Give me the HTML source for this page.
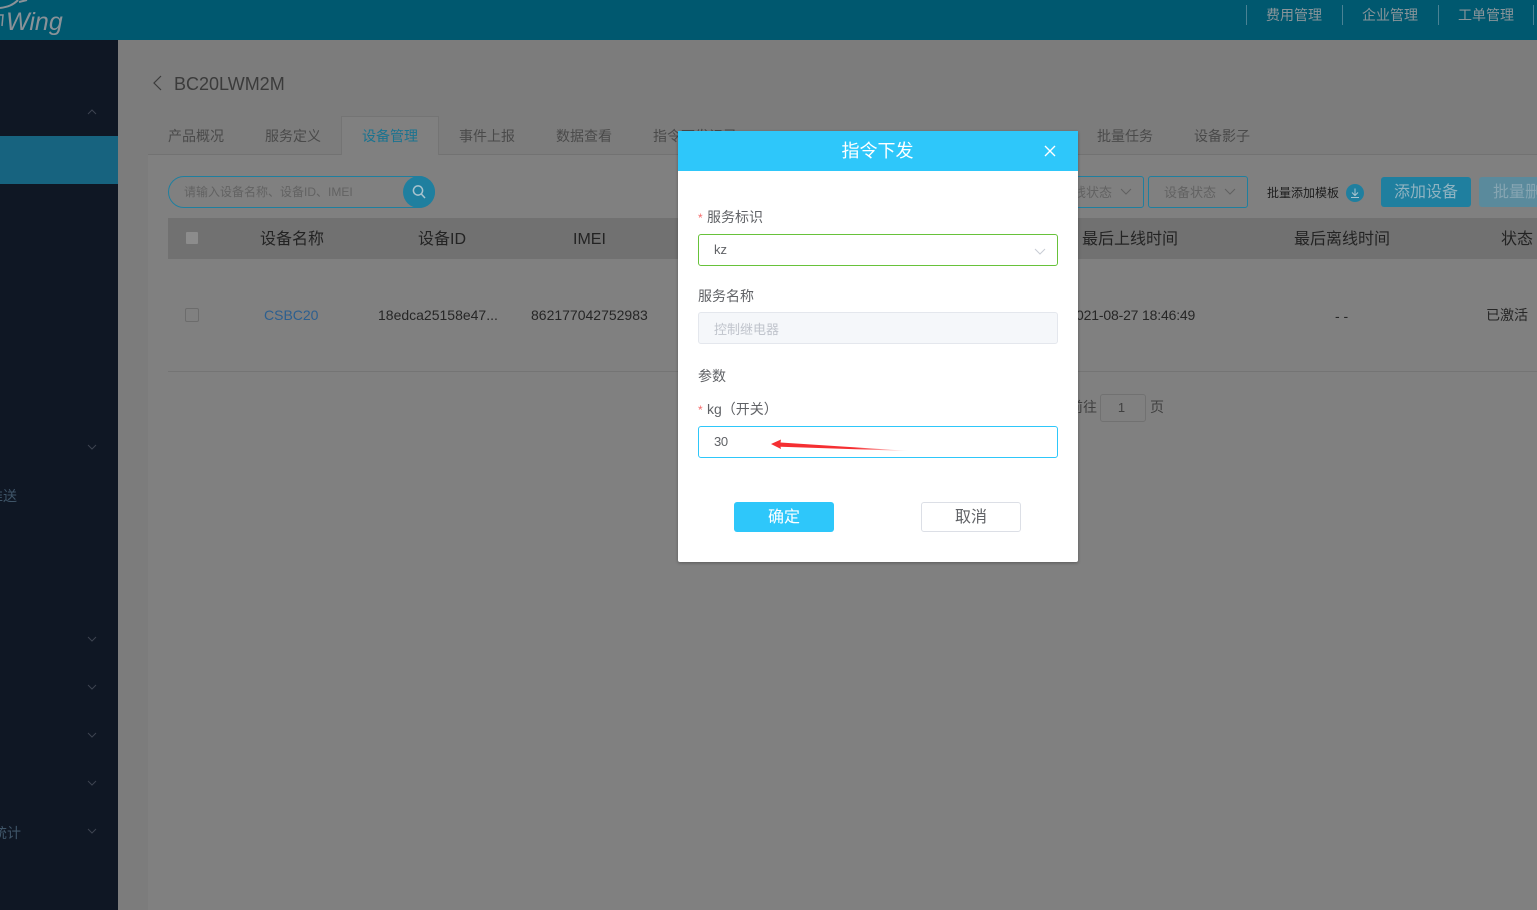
<!DOCTYPE html>
<html lang="zh-CN">
<head>
<meta charset="utf-8">
<title>指令下发</title>
<style>
html,body{margin:0;padding:0;width:1537px;height:910px;overflow:hidden;background:#7c7c7c;}
body{position:relative;font-family:"Liberation Sans","Noto Sans CJK SC",sans-serif;font-size:14px;color:#333;}
.a{position:absolute;white-space:nowrap;line-height:1;}
.box{position:absolute;box-sizing:border-box;}
.c{text-align:center;}
svg{position:absolute;overflow:visible;}
</style>
</head>
<body>
<!-- top bar -->
<div class="box" style="left:0;top:0;width:1537px;height:40px;background:#00586f;"></div>
<div class="a" style="left:6px;top:10px;font-size:25px;font-style:italic;color:#8a9298;">Wing</div>
<svg style="left:0;top:0;" width="40" height="40"><path d="M0 8C8 7 13 5 18 0M19 2L27 0" fill="none" stroke="#8a9298" stroke-width="2"/><path d="M0 15H3L2 26" fill="none" stroke="#8a9298" stroke-width="1.5"/></svg>
<div class="box" style="left:1246px;top:5px;width:1px;height:20px;background:#4a8294;"></div>
<div class="box" style="left:1342px;top:5px;width:1px;height:20px;background:#4a8294;"></div>
<div class="box" style="left:1438px;top:5px;width:1px;height:20px;background:#4a8294;"></div>
<div class="box" style="left:1533px;top:5px;width:1px;height:20px;background:#4a8294;"></div>
<div class="a" style="left:1266px;top:8px;color:#8a959a;">费用管理</div>
<div class="a" style="left:1362px;top:8px;color:#8a959a;">企业管理</div>
<div class="a" style="left:1458px;top:8px;color:#8a959a;">工单管理</div>

<!-- sidebar -->
<div class="box" style="left:0;top:40px;width:118px;height:870px;background:#0f1724;"></div>
<div class="box" style="left:0;top:136px;width:118px;height:48px;background:#17637f;"></div>
<svg style="left:0;top:0;" width="118" height="910" fill="none" stroke="#3d4450" stroke-width="1">
<path d="M88 114L92 110L96 114"/>
<path d="M88 445L92 449L96 445"/>
<path d="M88 637L92 641L96 637"/>
<path d="M88 685L92 689L96 685"/>
<path d="M88 733L92 737L96 733"/>
<path d="M88 781L92 785L96 781"/>
<path d="M88 829L92 833L96 829"/>
</svg>
<div class="a" style="left:-11px;top:489px;color:#3f5568;">推送</div>
<div class="a" style="left:-7px;top:826px;color:#3f5568;">统计</div>

<!-- content -->
<div class="box" style="left:148px;top:155px;width:1389px;height:755px;background:#808080;"></div>
<svg style="left:0;top:0;" width="170" height="100" fill="none" stroke="#3b3b3b" stroke-width="1.2"><path d="M161 76L154 83L161 90"/></svg>
<div class="a" style="left:174px;top:75px;font-size:18px;color:#3b3b3b;">BC20LWM2M</div>

<!-- tabs -->
<div class="box" style="left:148px;top:154px;width:1389px;height:1px;background:#727272;"></div>
<div class="box" style="left:341px;top:116px;width:98px;height:39px;background:#808080;border:1px solid #747474;border-bottom:0;"></div>
<div class="a" style="left:168px;top:129px;color:#4a4a4a;">产品概况</div>
<div class="a" style="left:265px;top:129px;color:#4a4a4a;">服务定义</div>
<div class="a" style="left:362px;top:129px;color:#1a7390;">设备管理</div>
<div class="a" style="left:459px;top:129px;color:#4a4a4a;">事件上报</div>
<div class="a" style="left:556px;top:129px;color:#4a4a4a;">数据查看</div>
<div class="a" style="left:653px;top:129px;color:#4a4a4a;">指令下发记录</div>
<div class="a" style="left:1097px;top:129px;color:#4a4a4a;">批量任务</div>
<div class="a" style="left:1194px;top:129px;color:#4a4a4a;">设备影子</div>

<!-- search -->
<div class="box" style="left:168px;top:176px;width:267px;height:32px;border:1px solid #1f7f9f;border-radius:16px;"></div>
<div class="a" style="left:184px;top:186px;font-size:12px;color:#626262;">请输入设备名称、设备ID、IMEI</div>
<div class="box" style="left:403px;top:176px;width:32px;height:32px;border-radius:50%;background:#1f7f9f;"></div>
<svg style="left:403px;top:176px;" width="32" height="32" fill="none" stroke="#a9c4cf" stroke-width="1.5"><circle cx="15" cy="14.500" r="4.600"/><path d="M18.300 18L22 22"/></svg>

<!-- filters -->
<div class="box" style="left:1060px;top:176px;width:84px;height:32px;border:1px solid #1f7f9f;border-radius:3px;"></div>
<div class="a" style="left:1073px;top:186px;font-size:13px;color:#626262;">线状态</div>
<svg style="left:0;top:0;" width="1300" height="200" fill="none" stroke="#606060"><path d="M1121 189L1126 194L1131 189"/><path d="M1225 189L1230 194L1235 189"/></svg>
<div class="box" style="left:1148px;top:176px;width:100px;height:32px;border:1px solid #1f7f9f;border-radius:3px;"></div>
<div class="a" style="left:1164px;top:186px;font-size:13px;color:#626262;">设备状态</div>
<div class="a" style="left:1267px;top:187px;font-size:12px;color:#1d1d1d;">批量添加模板</div>
<div class="box" style="left:1346px;top:184px;width:18px;height:18px;border-radius:50%;background:#1f7f9f;"></div>
<svg style="left:1346px;top:184px;" width="18" height="18" fill="none" stroke="#a9c4cf"><path d="M9 4.500V11M6 8.500L9 11.500L12 8.500M5 13.500H13"/></svg>
<div class="box c" style="left:1381px;top:177px;width:90px;height:30px;background:#1f7f9f;border-radius:3px;color:#8fb3c1;font-size:16px;line-height:31px;">添加设备</div>
<div class="box" style="left:1479px;top:177px;width:70px;height:30px;background:#5a8a9c;border-radius:3px;color:#86a5b2;font-size:16px;line-height:31px;padding-left:14px;white-space:nowrap;overflow:hidden;">批量删除</div>

<!-- table -->
<div class="box" style="left:168px;top:218px;width:1369px;height:41px;background:#717171;"></div>
<div class="box" style="left:186px;top:232px;width:12px;height:12px;background:#8c8c8c;border-radius:1px;"></div>
<div class="a" style="left:260px;top:232px;font-size:16px;color:#232323;">设备名称</div>
<div class="a" style="left:418px;top:232px;font-size:16px;color:#232323;">设备ID</div>
<div class="a" style="left:573px;top:232px;font-size:16px;color:#232323;">IMEI</div>
<div class="a" style="left:1082px;top:232px;font-size:16px;color:#232323;">最后上线时间</div>
<div class="a" style="left:1294px;top:232px;font-size:16px;color:#232323;">最后离线时间</div>
<div class="a" style="left:1501px;top:232px;font-size:16px;color:#232323;">状态</div>

<div class="box" style="left:185px;top:308px;width:14px;height:14px;border:1px solid #6c6c6c;border-radius:2px;"></div>
<div class="a" style="left:264px;top:308px;color:#2c5f8f;">CSBC20</div>
<div class="a" style="left:378px;top:308px;color:#262626;">18edca25158e47...</div>
<div class="a" style="left:531px;top:308px;color:#262626;">862177042752983</div>
<div class="a" style="left:1076px;top:308px;color:#262626;letter-spacing:-.17px;">021-08-27 18:46:49</div>
<div class="a" style="left:1335px;top:309px;color:#262626;">- -</div>
<div class="a" style="left:1486px;top:308px;font-size:14px;color:#262626;">已激活</div>
<div class="box" style="left:168px;top:371px;width:1369px;height:1px;background:#747474;"></div>

<!-- pagination -->
<div class="a" style="left:1069px;top:400px;color:#404040;">前往</div>
<div class="box c" style="left:1100px;top:394px;width:46px;height:28px;border:1px solid #717171;border-radius:3px;line-height:26px;font-size:13px;color:#404040;padding-right:3px;">1</div>
<div class="a" style="left:1150px;top:400px;color:#404040;">页</div>

<!-- modal -->
<div class="box" style="left:678px;top:131px;width:400px;height:431px;background:#fff;border-radius:2px;box-shadow:0 1px 3px rgba(0,0,0,.3);"></div>
<div class="box c" style="left:678px;top:131px;width:400px;height:40px;background:#2ec7fa;color:#fff;font-size:18px;line-height:40px;padding-right:1px;">指令下发</div>
<svg style="left:1044px;top:145px;" width="12" height="12" fill="none" stroke="#fff" stroke-width="1.400"><path d="M1 1L11 11M11 1L1 11"/></svg>

<div class="a" style="left:698px;top:212px;font-size:12px;color:#f56c6c;">*</div>
<div class="a" style="left:707px;top:210px;color:#606266;">服务标识</div>
<div class="box" style="left:698px;top:234px;width:360px;height:32px;border:1px solid #67c23a;border-radius:3px;"></div>
<div class="a" style="left:714px;top:243px;font-size:13px;color:#606266;">kz</div>
<svg style="left:1034px;top:248px;" width="12" height="8" fill="none" stroke="#c8ccd4"><path d="M1 1L6 6L11 1"/></svg>

<div class="a" style="left:698px;top:289px;color:#606266;">服务名称</div>
<div class="box" style="left:698px;top:312px;width:360px;height:32px;background:#f5f7fa;border:1px solid #e4e7ed;border-radius:3px;"></div>
<div class="a" style="left:714px;top:323px;font-size:13px;color:#c0c4cc;">控制继电器</div>

<div class="a" style="left:698px;top:369px;color:#606266;">参数</div>
<div class="a" style="left:698px;top:404px;font-size:12px;color:#f56c6c;">*</div>
<div class="a" style="left:707px;top:402px;color:#606266;">kg（开关）</div>
<div class="box" style="left:698px;top:426px;width:360px;height:32px;border:1px solid #2ec7fa;border-radius:3px;"></div>
<div class="a" style="left:714px;top:435px;font-size:13px;color:#606266;letter-spacing:-.3px;">30</div>
<svg style="left:0;top:0;" width="1000" height="500">
<defs><linearGradient id="g" x1="771" y1="0" x2="910" y2="0" gradientUnits="userSpaceOnUse"><stop offset="0" stop-color="#f52f32"/><stop offset=".6" stop-color="#f52f32"/><stop offset="1" stop-color="#f52f32" stop-opacity="0"/></linearGradient></defs>
<path d="M771 444L781 439.500L780.500 442.500L910 451L780.500 446.800L781 449Z" fill="url(#g)"/>
</svg>

<div class="box c" style="left:734px;top:502px;width:100px;height:30px;background:#2ec7fa;border-radius:3px;color:#fff;line-height:31px;font-size:16px;">确定</div>
<div class="box c" style="left:921px;top:502px;width:100px;height:30px;background:#fff;border:1px solid #dcdfe6;border-radius:3px;color:#606266;line-height:29px;font-size:16px;">取消</div>
</body>
</html>
